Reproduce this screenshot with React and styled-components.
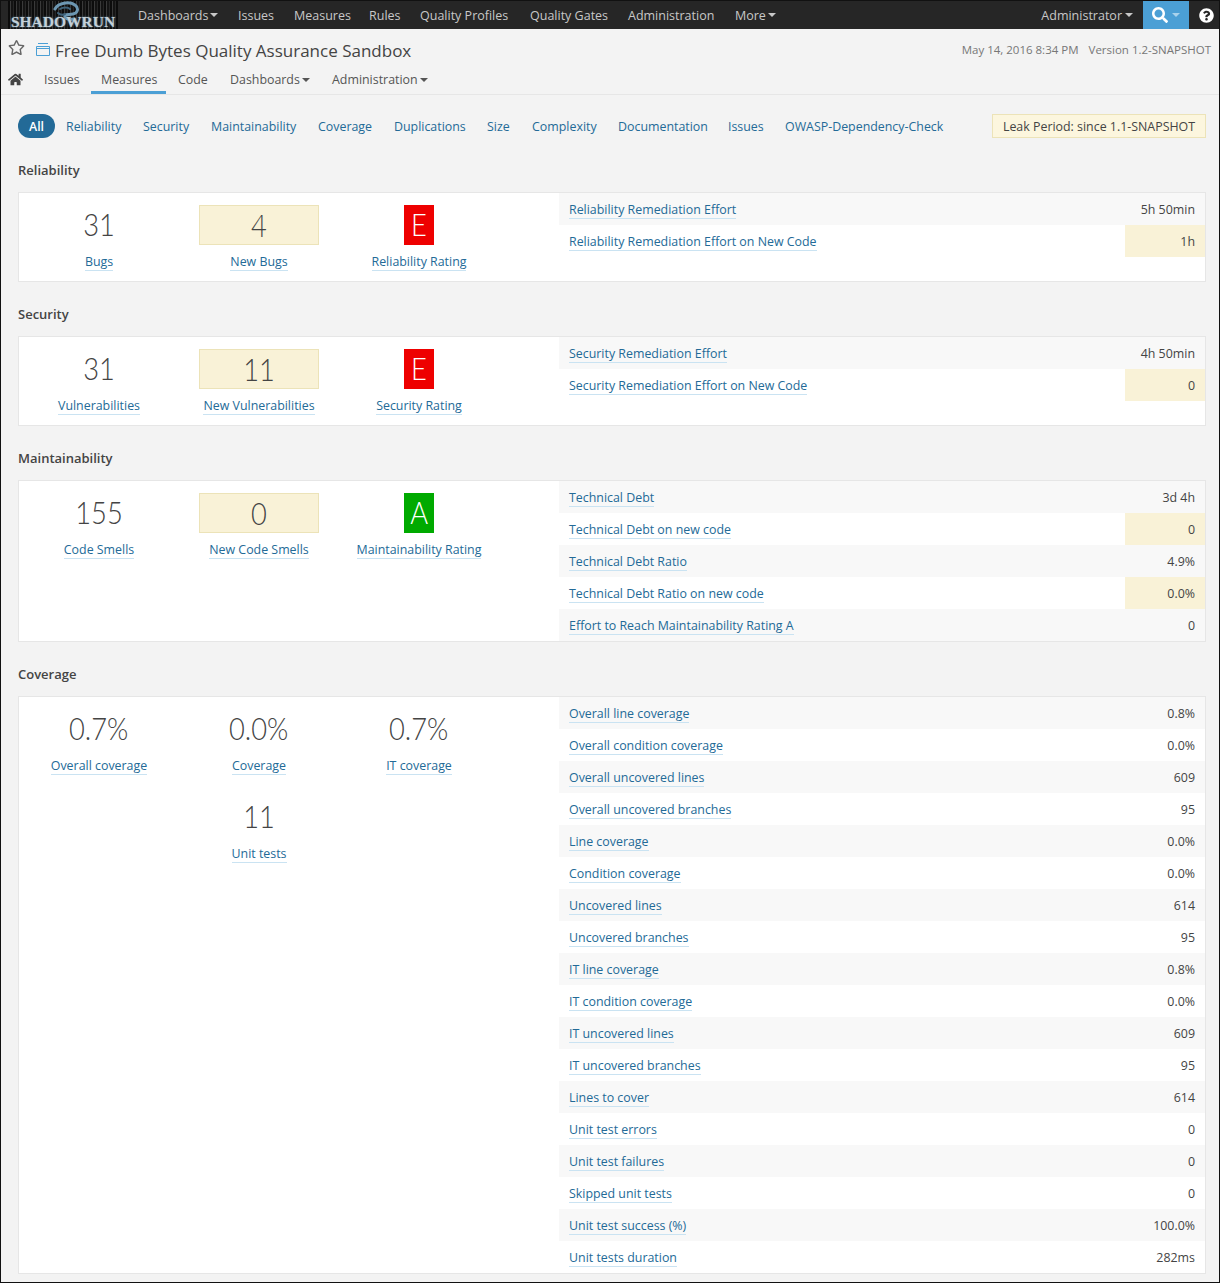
import React from 'react';
import styled, { createGlobalStyle } from 'styled-components';
import { FaRegStar, FaHome, FaSearch, FaQuestionCircle } from 'react-icons/fa';

const Global = createGlobalStyle`
  html, body { margin: 0; padding: 0; background: #f3f3f3; }
  body { font-family: "Open Sans", "Liberation Sans", sans-serif; font-size: 12.4px; color: #444; }
  * { box-sizing: border-box; }
`;

const Page = styled.div`
  width: 1220px; height: 1283px; overflow: hidden;
  border: 1px solid #111;
  background: #f3f3f3;
  display: flex; flex-direction: column;
`;
const TopBar = styled.div`
  height: 28px; flex: none; background: #262626;
  display: flex; align-items: stretch; color: #c8c8c8;
`;
const Logo = styled.div`
  width: 110px; margin-left: 7px; height: 28px; position: relative;
  background: repeating-linear-gradient(90deg, #0c0c0c 0 2px, #3a3a3a 2px 3px, #141414 3px 5px, #262626 5px 6px);
  overflow: hidden;
  display: flex; align-items: flex-end; justify-content: center;
`;
const LogoText = styled.span`
  position: relative; font-family: "Liberation Serif", serif; font-size: 15.5px; line-height: 15px;
  color: #c3d0d8; white-space: nowrap; font-weight: 700; text-shadow: 0 0 2px #6f97b0;
`;
const Dragon = styled.svg`
  position: absolute; left: 40px; top: 0; width: 34px; height: 20px;
`;
const TopItem = styled.span`
  display: flex; align-items: center; gap: 3px;
  margin-left: ${p => p.$ml}px; font-size: 12.5px; white-space: nowrap;
`;
const FixedText = styled.span`
  display: inline-block; width: ${p => p.$w}px; white-space: nowrap;
`;
const Spacer = styled.div` flex: 1; `;
const SearchBtn = styled.div`
  width: 46px; margin-left: 10px; background: #4b9fd5; color: #fff; display: flex; align-items: center;
  justify-content: center; gap: 4px;
`;
const HelpBtn = styled.div`
  width: 30px; padding-left: 4px; color: #fff; display: flex; align-items: center; justify-content: center;
`;
const Caret = styled.i`
  display: inline-block; width: 0; height: 0;
  border-left: 4px solid transparent; border-right: 4px solid transparent;
  border-top: 4px solid ${p => p.$color || 'currentColor'};
`;

const Context = styled.div`
  height: 66px; flex: none; border-bottom: 1px solid #e6e6e6; background: #f3f3f3;
  display: flex; flex-direction: column;
`;
const TitleRow = styled.div`
  height: 38px; flex: none; display: flex; align-items: center; padding: 4px 8px 0 7px;
`;
const StarWrap = styled.span`
  display: flex; color: #666; margin-bottom: 5px;
`;
const ProjectGlyph = styled.svg`
  margin: 0 0 1px 11px; flex: none;
`;
const ProjectName = styled.span`
  font-size: 17px; color: #444; margin-left: 5px; white-space: nowrap;
`;
const Meta = styled.span`
  font-size: 11.5px; color: #777; margin-left: ${p => p.$ml || 0}px; margin-bottom: 1px; white-space: nowrap;
`;
const Tabs = styled.div`
  height: 27px; flex: none; display: flex; align-items: stretch; padding-left: 7px;
`;
const HomeWrap = styled.span`
  display: flex; color: #444; width: 16px; align-self: flex-start; margin-top: 5px;
`;
const Tab = styled.div`
  display: flex; align-items: center; gap: 4px; height: 27px; padding: 1px 10px 0;
  margin-left: ${p => p.$ml ?? 0}px; font-size: 12.4px; color: #555; white-space: nowrap;
  border-bottom: 3px solid ${p => p.$active ? '#4b9fd5' : 'transparent'};
`;

const Filters = styled.div`
  height: 65px; flex: none; display: flex; align-items: center; padding: 0 13px 3px 17px;
`;
const Pill = styled.span`
  background: #236a97; color: #fff; font-weight: 600; font-size: 12.3px; border-radius: 12px;
  height: 24px; width: 37px; display: flex; align-items: center; justify-content: center;
`;
const FilterLink = styled.span`
  color: #236a97; font-size: 12.4px; margin-left: ${p => p.$ml}px; width: ${p => p.$w}px; white-space: nowrap;
`;
const Leak = styled.div`
  background: #fcf6de; border: 1px solid #ece3b8; color: #444; font-size: 12.4px;
  height: 24px; width: 214px; display: flex; align-items: center; justify-content: center; white-space: nowrap;
`;

const SectionTitle = styled.h2`
  margin: 0; font-size: 13px; font-weight: 600; color: #444; height: 32px; line-height: 20px; padding-left: 17px;
`;
const Card = styled.div`
  margin: 0 13px 22px 17px; background: #fff; border: 1px solid #e6e6e6;
  display: flex; height: ${p => p.$h}px;
`;
const Left = styled.div`
  width: 540px; flex: none; display: flex; flex-wrap: wrap; align-content: flex-start; padding: 12px 0 0 0;
`;
const Measure = styled.div`
  width: 160px; height: 88px; display: flex; flex-direction: column; align-items: center;
`;
const Value = styled.div`
  height: 40px; line-height: 38px; font-family: "Lato", "Open Sans", sans-serif; font-size: 31px; font-weight: 300; color: #444; text-align: center;
  ${p => p.$leak ? 'width: 120px; background: #f9f2d7; border: 1px solid #ece3b8;' : ''}
  ${p => p.$rating ? `width: 30px; color: #fff; background: ${p.$rating};` : ''}
`;
const ValueText = styled.span`
  display: inline-block; transform: scaleX(0.88);
`;
const Label = styled.span`
  margin-top: 8px; font-size: 12.4px; color: #236a97; line-height: 17px;
  border-bottom: 1px solid #cae3f2; white-space: nowrap;
`;
const Right = styled.div`
  flex: 1; display: flex; flex-direction: column;
`;
const Row = styled.div`
  height: 32px; flex: none; display: flex; align-items: center; padding-left: 10px;
  background: ${p => p.$odd ? '#f8f8f8' : '#fff'};
`;
const RowLabel = styled.span`
  margin-top: 2px; font-size: 12.4px; color: #236a97; line-height: 17px; border-bottom: 1px solid #cae3f2; white-space: nowrap;
`;
const RowValue = styled.div`
  margin-left: auto; width: 80px; height: 32px; display: flex; align-items: center; justify-content: flex-end;
  padding-right: 10px; font-size: 12.4px; color: #444;
  ${p => p.$leak ? 'background: #f9f2d7;' : ''}
`;

const sections = [
  { title: 'Reliability', h: 90, measures: [['31', 'Bugs'], ['4', 'New Bugs', 'leak'], ['E', 'Reliability Rating', '#ee0000']],
    rows: [['Reliability Remediation Effort', '5h 50min'], ['Reliability Remediation Effort on New Code', '1h', 1]] },
  { title: 'Security', h: 90, measures: [['31', 'Vulnerabilities'], ['11', 'New Vulnerabilities', 'leak'], ['E', 'Security Rating', '#ee0000']],
    rows: [['Security Remediation Effort', '4h 50min'], ['Security Remediation Effort on New Code', '0', 1]] },
  { title: 'Maintainability', h: 162, measures: [['155', 'Code Smells'], ['0', 'New Code Smells', 'leak'], ['A', 'Maintainability Rating', '#00aa00']],
    rows: [['Technical Debt', '3d 4h'], ['Technical Debt on new code', '0', 1], ['Technical Debt Ratio', '4.9%'], ['Technical Debt Ratio on new code', '0.0%', 1], ['Effort to Reach Maintainability Rating A', '0']] },
  { title: 'Coverage', h: 578, measures: [['0.7%', 'Overall coverage'], ['0.0%', 'Coverage'], ['0.7%', 'IT coverage'], null, ['11', 'Unit tests']],
    rows: [['Overall line coverage', '0.8%'], ['Overall condition coverage', '0.0%'], ['Overall uncovered lines', '609'], ['Overall uncovered branches', '95'], ['Line coverage', '0.0%'], ['Condition coverage', '0.0%'], ['Uncovered lines', '614'], ['Uncovered branches', '95'], ['IT line coverage', '0.8%'], ['IT condition coverage', '0.0%'], ['IT uncovered lines', '609'], ['IT uncovered branches', '95'], ['Lines to cover', '614'], ['Unit test errors', '0'], ['Unit test failures', '0'], ['Skipped unit tests', '0'], ['Unit test success (%)', '100.0%'], ['Unit tests duration', '282ms']] },
];

const filters = [['Reliability', 55, 11], ['Security', 46, 22], ['Maintainability', 85, 22], ['Coverage', 54, 22], ['Duplications', 71, 22], ['Size', 23, 22], ['Complexity', 64, 22], ['Documentation', 88, 22], ['Issues', 35, 22], ['OWASP-Dependency-Check', 161, 22]];
const topItems = [['Dashboards', 69, true], ['Issues', 36], ['Measures', 55], ['Rules', 31], ['Quality Profiles', 90], ['Quality Gates', 78], ['Administration', 87], ['More', 30, true]];

const ProjectIcon = () => (
  <ProjectGlyph width="14" height="13" viewBox="0 0 14 13" fill="none" stroke="#4b9fd5" strokeWidth="1">
    <path d="M2 .5h10M.5 3.5h13v9H.5zM.5 5.5h13" />
  </ProjectGlyph>
);
const DragonMark = () => (
  <Dragon viewBox="0 0 34 20" fill="none" stroke="#6d97b2" strokeWidth="3" strokeLinecap="round">
    <path d="M7 8C10 2 21 0 27 4c4 3 3 8-2 9-5 1-9 0-8 3 .5 2 5 3 9 2" />
    <path d="M12 8c3-2 8-2 10 0M10 12c2 2 5 2 7 1" stroke="#3f6279" strokeWidth="2" />
  </Dragon>
);

export default function App() {
  return (
    <Page>
      <Global />
      <TopBar>
        <Logo><DragonMark /><LogoText>SHADOWRUN</LogoText></Logo>
        {topItems.map(([t, w, c]) => (
          <TopItem key={t} $ml={20}><FixedText $w={w}>{t}</FixedText>{c && <Caret />}</TopItem>
        ))}
        <Spacer />
        <TopItem $ml={0}>Administrator<Caret /></TopItem>
        <SearchBtn><FaSearch size={16} /><Caret $color="#a9d2ec" /></SearchBtn>
        <HelpBtn><FaQuestionCircle size={15} /></HelpBtn>
      </TopBar>
      <Context>
        <TitleRow>
          <StarWrap><FaRegStar size={17} /></StarWrap>
          <ProjectIcon />
          <ProjectName>Free Dumb Bytes Quality Assurance Sandbox</ProjectName>
          <Spacer />
          <Meta>May 14, 2016 8:34 PM</Meta>
          <Meta $ml={10}>Version 1.2-SNAPSHOT</Meta>
        </TitleRow>
        <Tabs>
          <HomeWrap><FaHome size={15} /></HomeWrap>
          <Tab $ml={10}><FixedText $w={35}>Issues</FixedText></Tab>
          <Tab $ml={2} $active><FixedText $w={55}>Measures</FixedText></Tab>
          <Tab $ml={2}><FixedText $w={31}>Code</FixedText></Tab>
          <Tab $ml={1}><FixedText $w={68}>Dashboards</FixedText><Caret /></Tab>
          <Tab $ml={2}><FixedText $w={84}>Administration</FixedText><Caret /></Tab>
        </Tabs>
      </Context>
      <Filters>
        <Pill>All</Pill>
        {filters.map(([t, w, ml]) => <FilterLink key={t} $w={w} $ml={ml}>{t}</FilterLink>)}
        <Spacer />
        <Leak>Leak Period: since 1.1-SNAPSHOT</Leak>
      </Filters>
      {sections.map(s => (
        <section key={s.title}>
          <SectionTitle>{s.title}</SectionTitle>
          <Card $h={s.h}>
            <Left>
              {s.measures.map((m, i) => m ? (
                <Measure key={m[1]}>
                  <Value $leak={m[2] === 'leak'} $rating={m[2] && m[2] !== 'leak' ? m[2] : undefined}><ValueText>{m[0]}</ValueText></Value>
                  <Label>{m[1]}</Label>
                </Measure>
              ) : <Measure key={i} />)}
            </Left>
            <Right>
              {s.rows.map((r, i) => (
                <Row key={r[0]} $odd={i % 2 === 0}>
                  <RowLabel>{r[0]}</RowLabel>
                  <RowValue $leak={r[2]}>{r[1]}</RowValue>
                </Row>
              ))}
            </Right>
          </Card>
        </section>
      ))}
    </Page>
  );
}
